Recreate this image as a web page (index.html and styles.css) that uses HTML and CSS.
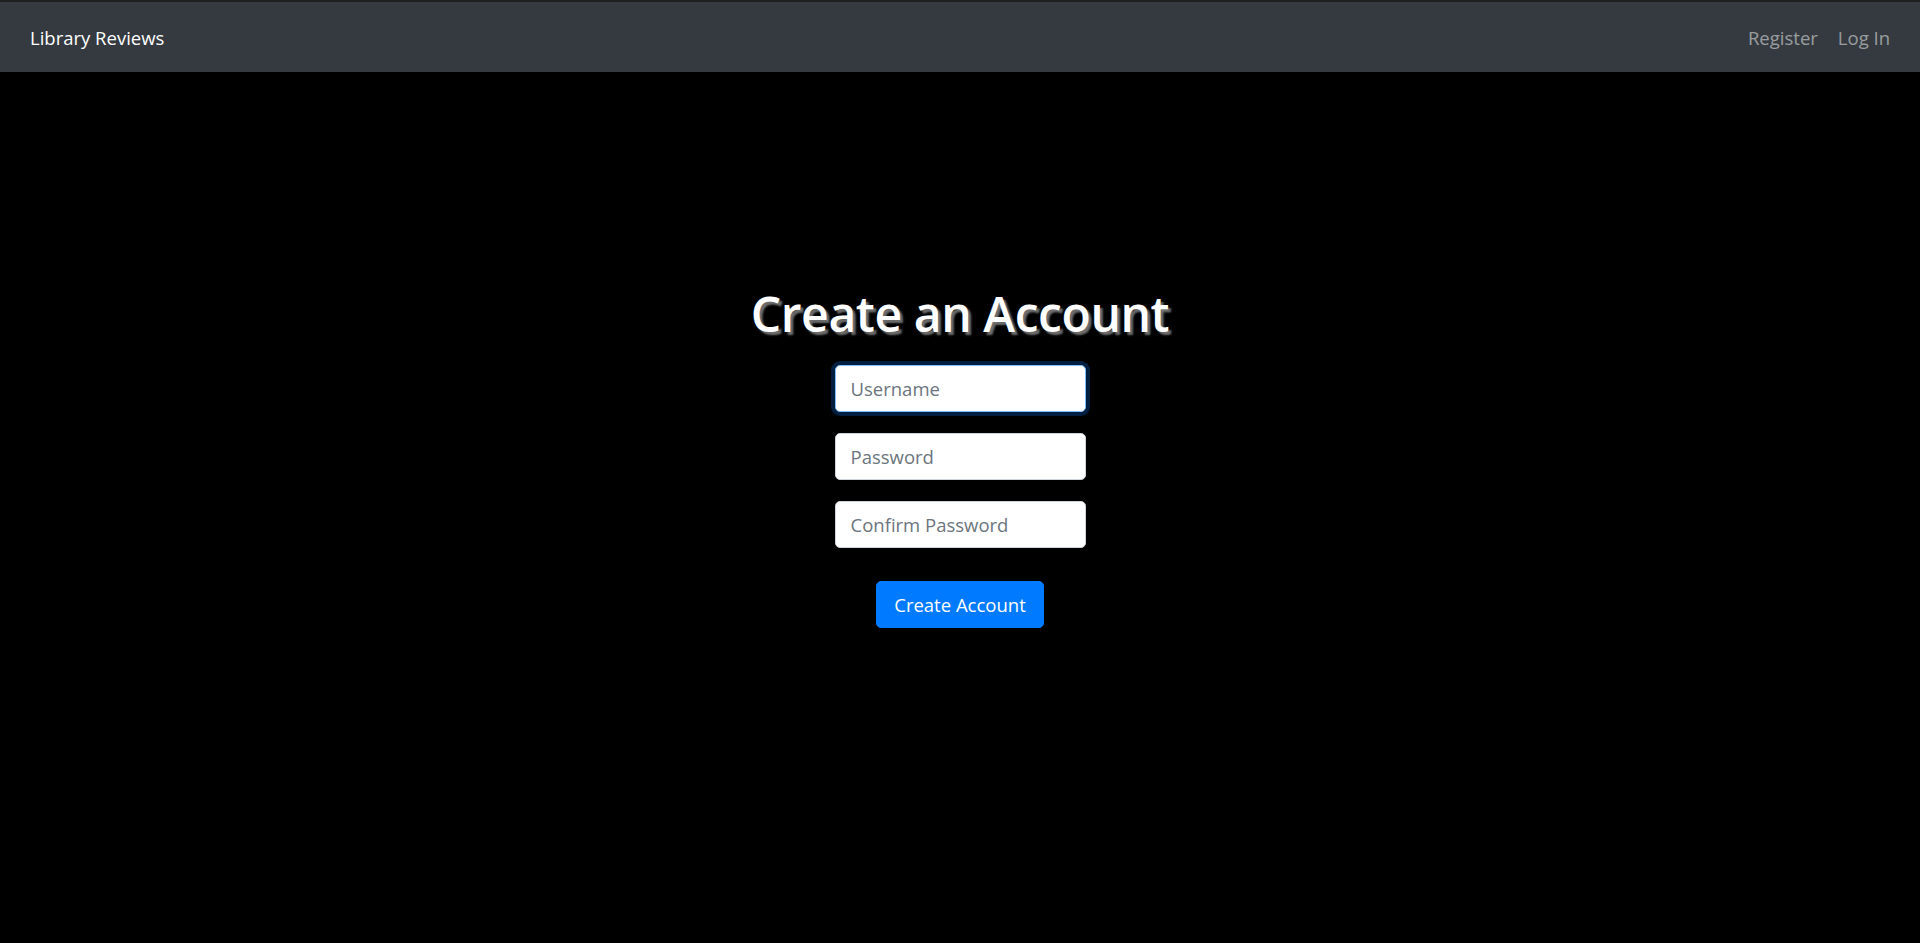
FILE: index.html
```html
<!DOCTYPE html>
<html lang="en">
<head>
<meta charset="utf-8">
<title>Library Reviews</title>
<link rel="stylesheet" href="styles.css">
</head>
<body>
<nav class="navbar">
  <a class="brand" href="#">Library Reviews</a>
  <div class="nav-links">
    <a class="nav-link" href="#">Register</a>
    <a class="nav-link" href="#">Log In</a>
  </div>
</nav>
<main class="main">
  <h1 class="title">Create an Account</h1>
  <form class="form">
    <input class="field focused" type="text" placeholder="Username">
    <input class="field" type="password" placeholder="Password">
    <input class="field" type="password" placeholder="Confirm Password">
    <button class="btn" type="button">Create Account</button>
  </form>
</main>
</body>
</html>
```

FILE: styles.css
```css
* { box-sizing: border-box; }
html, body {
  margin: 0;
  height: 100%;
}
body {
  background: #000;
  font-family: "Open Sans", "Noto Sans", sans-serif;
  color: #fff;
  display: flex;
  flex-direction: column;
}
.navbar {
  flex: none;
  height: 72px;
  border-top: 2px solid #1e1f21;
  background: #343a40;
  display: flex;
  align-items: center;
  justify-content: space-between;
  padding: 0 20px 0 30px;
}
.brand {
  color: #fff;
  text-decoration: none;
  font-size: 18.5px;
}
.nav-links {
  display: flex;
}
.nav-link {
  color: rgba(255,255,255,0.5);
  text-decoration: none;
  font-size: 18.5px;
  padding: 0 10px;
}
.main {
  flex: 1;
  display: flex;
  flex-direction: column;
  align-items: center;
  padding-top: 212px;
}
.title {
  margin: 0 0 21px;
  font-size: 48px;
  line-height: 60px;
  font-weight: 600;
  letter-spacing: -0.4px;
  text-shadow: 3px 3px 2px #6e6e6e;
}
.form {
  display: flex;
  flex-direction: column;
  align-items: center;
  gap: 21px;
}
.field {
  width: 251px;
  height: 47px;
  border: 1px solid #ced4da;
  border-radius: 5px;
  background: #fff;
  padding: 0 15px;
  font-family: inherit;
  font-size: 18.5px;
  color: #495057;
  outline: none;
}
.field::placeholder {
  color: #6c757d;
}
.field.focused {
  border-color: #80bdff;
  box-shadow: 0 0 0 4px rgba(0,123,255,0.25);
}
.btn {
  margin-top: 12px;
  width: 168px;
  height: 47px;
  background: #007bff;
  border: 1px solid #007bff;
  border-radius: 5px;
  color: #fff;
  font-family: inherit;
  font-size: 18.5px;
  padding: 0;
}
```
